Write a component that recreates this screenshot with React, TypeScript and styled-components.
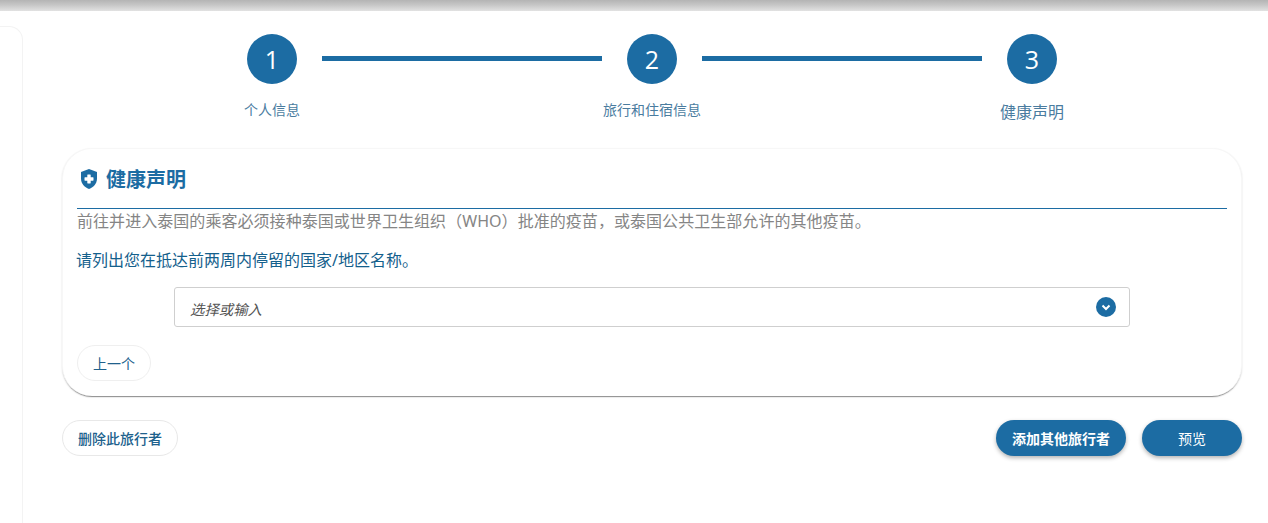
import React from "react";
import styled, { createGlobalStyle } from "styled-components";

const blue = "#1c6ca3";

const Global = createGlobalStyle`
  html, body { margin: 0; padding: 0; background: #fff; height: 100%; overflow: hidden; }
  body { font-family: "Noto Sans", "Noto Sans CJK SC", sans-serif; }
  * { box-sizing: border-box; }
`;

const TopBar = styled.div`
  height: 11px;
  background: linear-gradient(180deg, #b4b4b4 0%, #c6c6c6 45%, #e2e2e2 100%);
`;

const Page = styled.div`
  display: flex;
  height: 512px;
`;

const Side = styled.aside`
  width: 23px;
  height: 497px;
  margin-top: 15px;
  flex: none;
  background: #fff;
  border-radius: 0 14px 0 0;
  border: 1px solid #f3f3f3;
  border-left: 0;
  border-bottom: 0;
`;

const Main = styled.main`
  flex: 1;
  min-width: 0;
  padding: 0 26px 0 39px;
`;

const Stepper = styled.div`
  display: flex;
  justify-content: center;
  height: 137px;
  padding-top: 23px;
`;

const Step = styled.div`
  width: 50px;
  flex: none;
  display: flex;
  flex-direction: column;
  align-items: center;
`;

const Circle = styled.div`
  width: 50px;
  height: 50px;
  border-radius: 50%;
  background: ${blue};
  color: #fff;
  font-size: 25px;
  line-height: 50px;
  text-align: center;
  font-family: "Open Sans", "Noto Sans", sans-serif;
`;

const StepLabel = styled.div<{ $big?: boolean }>`
  white-space: nowrap;
  color: #4a7c9f;
  font-size: ${(p) => (p.$big ? 16 : 14)}px;
  line-height: 20px;
  margin-top: ${(p) => (p.$big ? 18 : 16)}px;
`;

const Line = styled.div`
  width: 280px;
  height: 5px;
  background: ${blue};
  margin: 22px 25px 0;
  flex: none;
`;

const Card = styled.section`
  height: 248px;
  border-radius: 30px;
  background: #fff;
  border: 1px solid #f7f7f7;
  border-bottom: 0;
  box-shadow: 0 2px 1px -1px rgba(0, 0, 0, 0.38), 0 1px 2px rgba(0, 0, 0, 0.14);
  padding: 0 14px;
`;

const CardHead = styled.div`
  height: 60px;
  display: flex;
  align-items: center;
  gap: 8px;
  padding: 0 0 1px 3px;
  border-bottom: 1px solid ${blue};
  color: ${blue};
  font-size: 20px;
  font-weight: 700;
`;

const ShieldIcon = styled.svg`
  width: 18px;
  height: 22px;
  margin-top: 2px;
  flex: none;
`;

const Notice = styled.p`
  margin: -1px 0 0;
  color: #858585;
  font-size: 16px;
  line-height: 26px;
  letter-spacing: 0.05px;
`;

const Question = styled.p`
  margin: 13px 0 0 -1px;
  color: #14608c;
  font-size: 16px;
  line-height: 26px;
`;

const SelectBox = styled.div`
  width: 956px;
  height: 40px;
  margin: 14px 0 0 97px;
  border: 1px solid #cfcfcf;
  border-radius: 3px;
  display: flex;
  align-items: center;
  justify-content: space-between;
  padding: 0 13px 0 15px;
`;

const Placeholder = styled.span`
  font-size: 14.4px;
  font-style: italic;
  color: #555;
  padding-top: 3px;
`;

const Chevron = styled.span`
  width: 20px;
  height: 20px;
  border-radius: 50%;
  background: ${blue};
  display: flex;
  align-items: center;
  justify-content: center;
`;

const GhostButton = styled.button`
  height: 36px;
  border-radius: 18px;
  background: #fff;
  border: 1px solid #efefef;
  color: #20618c;
  font-family: inherit;
  font-size: 14px;
  padding: 0 15px;
`;

const BackRow = styled.div`
  margin-top: 18px;
`;

const Actions = styled.div`
  display: flex;
  align-items: center;
  margin-top: 24px;
  gap: 16px;
`;

const DeleteButton = styled(GhostButton)`
  margin-right: auto;
  font-weight: 500;
  border-color: #e8e8e8;
`;

const PrimaryButton = styled.button<{ $w: number; $bold?: boolean }>`
  width: ${(p) => p.$w}px;
  height: 36px;
  border-radius: 18px;
  border: 0;
  background: ${blue};
  color: #fff;
  font-family: inherit;
  font-size: 14px;
  font-weight: ${(p) => (p.$bold ? 700 : 400)};
  box-shadow: 0 2px 4px rgba(0, 0, 0, 0.3);
`;

export default function App() {
  return (
    <>
      <Global />
      <TopBar />
      <Page>
        <Side />
        <Main>
          <Stepper>
            <Step>
              <Circle>1</Circle>
              <StepLabel>个人信息</StepLabel>
            </Step>
            <Line />
            <Step>
              <Circle>2</Circle>
              <StepLabel>旅行和住宿信息</StepLabel>
            </Step>
            <Line />
            <Step>
              <Circle>3</Circle>
              <StepLabel $big>健康声明</StepLabel>
            </Step>
          </Stepper>
          <Card>
            <CardHead>
              <ShieldIcon viewBox="0 0 18 22">
                <path
                  fill={blue}
                  d="M9 1 17 4v6.500c0 4.800-3.300 8.800-8 10.500-4.700-1.700-8-5.700-8-10.500V4z"
                />
                <path
                  fill="#fff"
                  d="M7.800 6.500h2.400c.3 0 .5.200.5.500v2.300H13c.3 0 .5.200.5.500v2.400c0 .3-.2.500-.5.500h-2.300V15c0 .3-.2.500-.5.500H7.800c-.3 0-.5-.2-.5-.5v-2.300H5c-.3 0-.5-.2-.5-.5V9.800c0-.3.200-.5.500-.5h2.300V7c0-.3.200-.5.500-.5z"
                />
              </ShieldIcon>
              健康声明
            </CardHead>
            <Notice>前往并进入泰国的乘客必须接种泰国或世界卫生组织（WHO）批准的疫苗，或泰国公共卫生部允许的其他疫苗。</Notice>
            <Question>请列出您在抵达前两周内停留的国家/地区名称。</Question>
            <SelectBox>
              <Placeholder>选择或输入</Placeholder>
              <Chevron>
                <svg width="12" height="12" viewBox="0 0 12 12">
                  <path d="M2.500 4.500 6 8l3.500-3.500" fill="none" stroke="#fff" strokeWidth="2" />
                </svg>
              </Chevron>
            </SelectBox>
            <BackRow>
              <GhostButton>上一个</GhostButton>
            </BackRow>
          </Card>
          <Actions>
            <DeleteButton>删除此旅行者</DeleteButton>
            <PrimaryButton $w={130} $bold>添加其他旅行者</PrimaryButton>
            <PrimaryButton $w={100}>预览</PrimaryButton>
          </Actions>
        </Main>
      </Page>
    </>
  );
}
